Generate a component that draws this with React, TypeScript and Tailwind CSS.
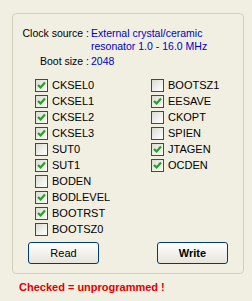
import React from "react"

const left = [
  { name: "CKSEL0", on: true },
  { name: "CKSEL1", on: true },
  { name: "CKSEL2", on: true },
  { name: "CKSEL3", on: true },
  { name: "SUT0", on: false },
  { name: "SUT1", on: true },
  { name: "BODEN", on: false },
  { name: "BODLEVEL", on: true },
  { name: "BOOTRST", on: true },
  { name: "BOOTSZ0", on: false },
]

const right = [
  { name: "BOOTSZ1", on: false },
  { name: "EESAVE", on: true },
  { name: "CKOPT", on: false },
  { name: "SPIEN", on: false },
  { name: "JTAGEN", on: true },
  { name: "OCDEN", on: true },
]

function Check({ name, on }: { name: string; on: boolean }) {
  return (
    <div className="flex h-4 items-center gap-[4px]">
      <div className="flex h-[13px] w-[13px] items-center justify-center border border-[#1c5180] bg-gradient-to-br from-[#dcdcd4] to-[#ffffff]">
        {on && (
          <svg width="9" height="9" viewBox="0 0 9 9">
            <polyline points="1,4 3.5,6.5 8,1.5" fill="none" stroke="#21a121" strokeWidth="2.2" />
          </svg>
        )}
      </div>
      <span className="text-[11px] leading-none text-black">{name}</span>
    </div>
  )
}

export default function App() {
  return (
    <div className="h-[301px] w-[252px] bg-[#f1efe2] pl-[12px] pt-[13px] font-['Liberation_Sans',sans-serif]">
      {/* Fuse group */}
      <div className="flex h-[261px] w-[232px] flex-col rounded-[4px] border border-[#d0d0bf]">
        <div className="mt-[13px] grid grid-cols-[76px_1fr] gap-x-[2px] text-[10.5px] leading-[13px]">
          <span className="text-right text-black">Clock source :</span>
          <span className="text-[#0000c0]">
            External crystal/ceramic
            <br />
            resonator 1.0 - 16.0 MHz
          </span>
          <span className="mt-[2px] text-right text-black">Boot size :</span>
          <span className="mt-[2px] text-[#0000c0]">2048</span>
        </div>

        <div className="mt-[9px] flex">
          <div className="ml-[22px] flex w-[116px] flex-col">
            {left.map((f) => (
              <Check key={f.name} {...f} />
            ))}
          </div>
          <div className="flex flex-col">
            {right.map((f) => (
              <Check key={f.name} {...f} />
            ))}
          </div>
        </div>

        <div className="mt-[5px] flex pl-[15px]">
          <button className="h-[22px] w-[71px] rounded-[3px] border border-[#003c74] bg-gradient-to-b from-[#ffffff] to-[#e6e4dc] text-[11px] text-black">
            Read
          </button>
          <button className="ml-[58px] h-[22px] w-[71px] rounded-[3px] border border-[#003c74] bg-gradient-to-b from-[#ffffff] to-[#e6e4dc] text-[11px] font-bold text-black">
            Write
          </button>
        </div>
      </div>

      <div className="mt-[7px] pl-[7px] text-[11px] font-bold leading-[13px] text-[#e00000]">
        Checked = unprogrammed !
      </div>
    </div>
  )
}
